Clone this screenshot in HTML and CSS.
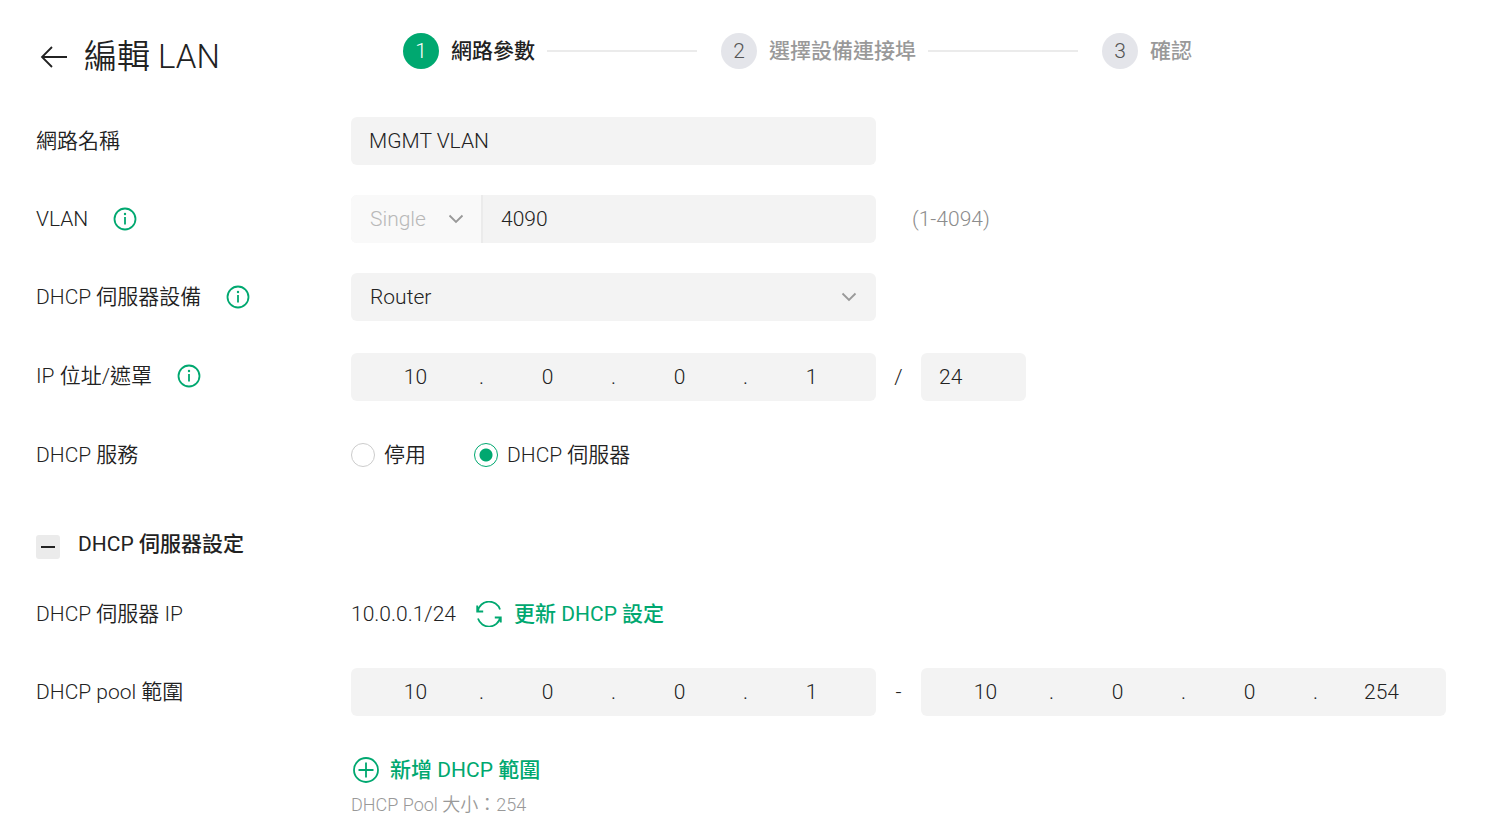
FILE: index.html
```html
<!DOCTYPE html>
<html lang="zh-Hant">
<head>
  <meta charset="UTF-8" />
  <meta name="viewport" content="width=device-width, initial-scale=1" />
  <title>編輯 LAN</title>
  <link rel="stylesheet" href="styles.css">
</head>
<body>
  <header class="page-header">
    <div class="title-bar">
      <a href="#" class="back" aria-label="返回">
        <svg width="28" height="24" viewBox="0 0 28 24"><path d="M27 12H2M12 2L2 12l10 10" /></svg>
      </a>
      <h1>編輯 <span class="latin">LAN</span></h1>
    </div>
    <ol class="steps">
      <li class="step active"><span class="step-num">1</span><span class="step-name">網路參數</span></li>
      <li class="step"><span class="step-num">2</span><span class="step-name">選擇設備連接埠</span></li>
      <li class="step"><span class="step-num">3</span><span class="step-name">確認</span></li>
    </ol>
  </header>

  <form class="lan-form">
    <div class="row">
      <div class="label"><label for="name">網路名稱</label></div>
      <div class="content">
        <input class="field" id="name" type="text" value="MGMT VLAN">
      </div>
    </div>

    <div class="row">
      <div class="label">
        <label for="vlan"><span class="latin">VLAN</span></label>
        <svg class="info" viewBox="0 0 24 24"><circle cx="12" cy="12" r="10.5" /><path d="M12 10v7.500" /><circle class="dot" cx="12" cy="7" r="1.200" /></svg>
      </div>
      <div class="content">
        <div class="field group">
          <div class="select-box mode">
            <select aria-label="VLAN" disabled><option>Single</option></select>
            <svg class="chevron" viewBox="0 0 16 10"><path d="M1.500 1.500L8 8l6.500-6.500" /></svg>
          </div>
          <input class="vlan-id" id="vlan" type="text" value="4090">
        </div>
        <span class="hint">(1-4094)</span>
      </div>
    </div>

    <div class="row">
      <div class="label">
        <label for="device"><span class="latin">DHCP</span> 伺服器設備</label>
        <svg class="info" viewBox="0 0 24 24"><circle cx="12" cy="12" r="10.5" /><path d="M12 10v7.500" /><circle class="dot" cx="12" cy="7" r="1.200" /></svg>
      </div>
      <div class="content">
        <div class="field select-box">
          <select id="device"><option>Router</option></select>
          <svg class="chevron" viewBox="0 0 16 10"><path d="M1.500 1.500L8 8l6.500-6.500" /></svg>
        </div>
      </div>
    </div>

    <div class="row tall">
      <div class="label">
        <label for="ip1"><span class="latin">IP</span> 位址/遮罩</label>
        <svg class="info" viewBox="0 0 24 24"><circle cx="12" cy="12" r="10.5" /><path d="M12 10v7.500" /><circle class="dot" cx="12" cy="7" r="1.200" /></svg>
      </div>
      <div class="content">
        <div class="field ip">
          <input id="ip1" type="text" value="10"><span>.</span>
          <input type="text" value="0" aria-label="IP 2"><span>.</span>
          <input type="text" value="0" aria-label="IP 3"><span>.</span>
          <input type="text" value="1" aria-label="IP 4">
        </div>
        <span class="sep">/</span>
        <input class="field mask" type="text" value="24" aria-label="遮罩">
      </div>
    </div>

    <div class="row">
      <div class="label"><span><span class="latin">DHCP</span> 服務</span></div>
      <div class="content radios">
        <label class="radio"><input type="radio" name="dhcp">停用</label>
        <label class="radio"><input type="radio" name="dhcp" checked><span><span class="latin">DHCP</span> 伺服器</span></label>
      </div>
    </div>

    <h2 class="section">
      <button type="button" class="collapse" aria-label="收合"></button>
      <span><span class="regular">DHCP</span> 伺服器設定</span>
    </h2>

    <div class="row">
      <div class="label"><span><span class="latin">DHCP</span> 伺服器 <span class="latin">IP</span></span></div>
      <div class="content">
        <span class="latin">10.0.0.1/24</span>
        <button type="button" class="action refresh">
          <svg width="26" height="26" viewBox="0 0 26 26"><path d="M1.200 4.500v6h6M1.800 10A11.500 11.500 0 0 1 24 8.500M24.800 21.500v-5h-6M24.200 16.500A11.500 11.500 0 0 1 2 17.500" /></svg>
          <span>更新 <span class="regular">DHCP</span> 設定</span>
        </button>
      </div>
    </div>

    <div class="row">
      <div class="label"><label for="from1"><span class="latin">DHCP pool</span> 範圍</label></div>
      <div class="content">
        <div class="field ip">
          <input id="from1" type="text" value="10"><span>.</span>
          <input type="text" value="0" aria-label="起始 2"><span>.</span>
          <input type="text" value="0" aria-label="起始 3"><span>.</span>
          <input type="text" value="1" aria-label="起始 4">
        </div>
        <span class="sep">-</span>
        <div class="field ip">
          <input type="text" value="10" aria-label="結束 1"><span>.</span>
          <input type="text" value="0" aria-label="結束 2"><span>.</span>
          <input type="text" value="0" aria-label="結束 3"><span>.</span>
          <input type="text" value="254" aria-label="結束 4">
        </div>
      </div>
    </div>

    <div class="pool">
      <button type="button" class="action add">
        <svg width="28" height="28" viewBox="0 0 28 28"><circle cx="15" cy="14" r="12" /><path d="M15 6.500v15M7.500 14h15" /></svg>
        <span>新增 <span class="regular">DHCP</span> 範圍</span>
      </button>
      <p class="pool-size"><span class="latin">DHCP Pool</span> 大小：<span class="latin">254</span></p>
    </div>
  </form>
</body>
</html>
```

FILE: styles.css
```css
* {
  box-sizing: border-box;
}
body {
  margin: 0;
  padding: 33px 36px 0;
  background: #fff;
  color: #222;
  font-family: Roboto, "Noto Sans CJK TC", sans-serif;
  font-size: 21px;
  font-weight: 350;
  line-height: 30px;
}
input, select, button {
  font: inherit;
  color: inherit;
  border: 0;
  margin: 0;
  padding: 0;
  background: none;
}
svg {
  display: block;
  flex: none;
  fill: none;
  stroke: currentColor;
  stroke-width: 1.8;
}

.latin, input, select, .hint, .sep, .step-num {
  font-weight: 350;
}
.regular {
  font-weight: 400;
}

/* Header */
.page-header {
  display: grid;
  grid-template-columns: 367px 1fr;
  align-items: start;
  margin-bottom: 36px;
}
.title-bar {
  display: flex;
  align-items: center;
  gap: 16px;
  padding-left: 4px;
}
.back {
  color: inherit;
}
h1 {
  margin: 0;
  font-size: 33px;
  font-weight: 350;
  line-height: 48px;
}
.steps {
  display: flex;
  gap: 24px;
  margin: 0;
  padding: 0;
  list-style: none;
}
.step {
  display: flex;
  align-items: center;
  gap: 12px;
  color: #999;
  font-weight: 500;
  white-space: nowrap;
}
.step:not(:last-child)::after {
  content: "";
  width: 150px;
  height: 2px;
  background: #ebebeb;
}
.step-num {
  width: 36px;
  border-radius: 50%;
  background: #e4e5ea;
  color: #555;
  line-height: 36px;
  text-align: center;
}
.active {
  color: #222;
}
.active .step-num {
  background: #00a870;
  color: #fff;
}

/* Form rows */
.lan-form {
  display: flex;
  flex-direction: column;
  gap: 30px;
}
.row {
  display: grid;
  grid-template-columns: 315px 1fr;
  min-height: 48px;
}
.label {
  display: flex;
  align-items: center;
  gap: 25px;
}
.content {
  display: flex;
  align-items: center;
}
.tall {
  min-height: 50px;
}
.tall .content {
  align-items: end;
}
.info {
  width: 24px;
  height: 24px;
  color: #00a870;
}
.info .dot {
  fill: currentColor;
  stroke: none;
}

/* Fields */
.field {
  flex: 0 1 525px;
  min-width: 0;
  height: 48px;
  border-radius: 6px;
  background: #f3f3f3;
}
input.field, .vlan-id {
  padding: 0 18px;
}
.group {
  display: flex;
  overflow: hidden;
}
.vlan-id {
  flex: 1;
  min-width: 0;
}
.select-box {
  position: relative;
}
.select-box select {
  width: 100%;
  height: 100%;
  padding: 0 19px;
  appearance: none;
  opacity: 1;
}
.mode {
  width: 132px;
  border-right: 2px solid #ebebeb;
  background: #f9f9f9;
}
.mode select {
  color: #b8b8b8;
}
.chevron {
  position: absolute;
  top: 19px;
  right: 19px;
  width: 16px;
  height: 10px;
  color: #999;
  pointer-events: none;
}
.mode .chevron {
  right: 17px;
}
.ip {
  display: flex;
  align-items: center;
}
.ip input {
  flex: 1;
  width: 0;
  text-align: center;
}
.ip span {
  display: flex;
  justify-content: center;
  width: 3px;
}
.sep {
  flex: none;
  width: 45px;
  text-align: center;
  line-height: 48px;
}
.mask {
  flex-basis: 105px;
}
.hint {
  margin-left: 36px;
  color: #8c8c8c;
}

/* Radios */
.radios {
  gap: 48px;
}
.radio {
  display: flex;
  align-items: center;
  gap: 9px;
}
.radio input {
  appearance: none;
  width: 24px;
  height: 24px;
  border: 1px solid #ccc;
  border-radius: 50%;
}
.radio input:checked {
  border-color: #00a870;
  background: radial-gradient(circle, #00a870 6px, transparent 7px);
}

/* DHCP section */
.section {
  display: flex;
  align-items: end;
  gap: 18px;
  margin: 20px 0 1px;
  font-size: 21px;
  font-weight: 500;
  line-height: 30px;
}
.collapse {
  display: grid;
  place-items: center;
  width: 24px;
  height: 24px;
  border-radius: 3px;
  background: #ebebeb;
}
.collapse::before {
  content: "";
  width: 14px;
  height: 2px;
  background: #222;
}
.action {
  display: flex;
  align-items: center;
  color: #00a870;
  font-weight: 500;
  cursor: pointer;
}
.refresh {
  gap: 12px;
  margin-left: 20px;
}
.add {
  gap: 11px;
  height: 48px;
}
.pool {
  padding-left: 315px;
}
.pool-size {
  margin: 0;
  color: #999;
  font-size: 18px;
  line-height: 22px;
}
```
